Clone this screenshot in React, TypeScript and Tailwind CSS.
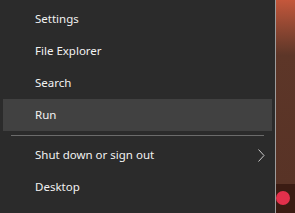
const topItems = ["Settings", "File Explorer", "Search", "Run"];

function Row({ label, active, sub }: { label: string; active?: boolean; sub?: boolean }) {
  return (
    <div
      className={`mx-[3px] flex h-8 items-center justify-between pl-8 pr-[7px] ${
        active ? "bg-[#414141]" : ""
      }`}
    >
      <span>{label}</span>
      {sub && (
        <svg width="7" height="13" viewBox="0 0 7 13" fill="none">
          <polyline points="0.5,0.5 6,6.5 0.5,12.5" stroke="#c8c8c8" strokeWidth="1" />
        </svg>
      )}
    </div>
  );
}

export default function App() {
  return (
    <div
      className="flex h-[213px] w-[295px] overflow-hidden text-[11.5px] text-[#f2f2f2]"
      style={{ fontFamily: '"Noto Sans", "Open Sans", sans-serif' }}
    >
      <div className="flex w-[275px] flex-col bg-[#2b2b2b] pt-[3px]">
        {topItems.map((item) => (
          <Row key={item} label={item} active={item === "Run"} />
        ))}
        <div className="mx-[11px] my-[3.5px] h-px bg-[#6b6b6b]" />
        <Row label="Shut down or sign out" sub />
        <Row label="Desktop" />
      </div>
      <div className="w-px bg-[#9c9c9c]" />
      <div className="flex flex-1 flex-col">
        <div className="flex-1 bg-gradient-to-b from-[#c4573b] via-[#5d3628] via-30% to-[#583326]" />
        <div className="flex h-[29px] items-center bg-[#3b1c13] pb-[2px]">
          <div className="h-[14px] w-[14px] rounded-full bg-[#e3304b]" />
        </div>
      </div>
    </div>
  );
}
